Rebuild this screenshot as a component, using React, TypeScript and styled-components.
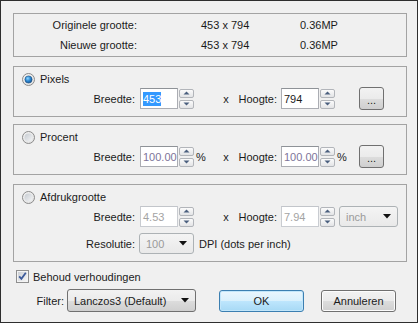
import React from "react";
import styled, { createGlobalStyle } from "styled-components";

const GlobalStyle = createGlobalStyle`
  html, body {
    margin: 0;
    padding: 0;
    background: #f0f0f0;
  }
  body {
    font-family: "Liberation Sans", Arial, sans-serif;
    font-size: 11px;
    color: #1b1b1b;
  }
`;

const Dialog = styled.div`
  width: 418px;
  height: 323px;
  box-sizing: border-box;
  border: 1px solid #2e2e2e;
  background: #f0f0f0;
  padding: 12px 11px 0 12px;
  display: flex;
  flex-direction: column;
`;

const InfoBox = styled.div`
  width: 394px;
  height: 44px;
  box-sizing: border-box;
  border: 1px solid #a3a3a3;
  padding-top: 1px;
`;

const InfoRow = styled.div`
  display: flex;
  height: 20px;
  align-items: center;
`;

const InfoLabel = styled.div`
  width: 123px;
  text-align: right;
  margin-right: 64px;
`;

const InfoValue = styled.div`
  width: 99px;
`;

const Group = styled.div<{ $top: number }>`
  width: 394px;
  box-sizing: border-box;
  margin-top: ${(p) => p.$top}px;
  border: 1px solid #a3a3a3;
  padding: 6px 0 7px 0;
  display: flex;
  flex-direction: column;
`;

const GroupHeader = styled.label`
  display: flex;
  align-items: center;
  height: 12px;
  padding-left: 8px;
  gap: 5px;
  margin-bottom: 3px;
`;

const FormRow = styled.div<{ $gap?: number }>`
  display: flex;
  align-items: center;
  height: 21px;
  margin-top: ${(p) => p.$gap ?? 0}px;
`;

const FieldLabel = styled.div<{ $w: number; $mr: number }>`
  width: ${(p) => p.$w}px;
  margin-right: ${(p) => p.$mr}px;
  text-align: right;
  flex: none;
`;

const TextBox = styled.div<{ $tone: "normal" | "muted" | "disabled" }>`
  width: 38px;
  height: 21px;
  box-sizing: border-box;
  border: 1px solid ${(p) => (p.$tone === "disabled" ? "#c9ccd1" : "#abadb3")};
  border-top-color: ${(p) => (p.$tone === "disabled" ? "#c2c5ca" : "#8e9297")};
  background: #fff;
  padding-left: 2px;
  display: flex;
  align-items: center;
  color: ${(p) =>
    p.$tone === "normal" ? "#1b1b1b" : p.$tone === "muted" ? "#7d7499" : "#a3a3a3"};
  flex: none;
`;

const Selected = styled.span`
  background: #3399ff;
  color: #fff;
  line-height: 14px;
`;

const Spin = styled.div`
  width: 15px;
  height: 20px;
  margin-left: 1px;
  display: flex;
  flex-direction: column;
  justify-content: space-between;
  flex: none;
`;

const SpinButton = styled.div`
  height: 9px;
  box-sizing: border-box;
  border: 1px solid #b2b5ba;
  border-radius: 2px;
  background: linear-gradient(#fbfbfb, #e3e4e6);
  display: flex;
  align-items: center;
  justify-content: center;
`;

const UnitCell = styled.div<{ $w: number }>`
  width: ${(p) => p.$w}px;
  padding-left: 2px;
  box-sizing: border-box;
  flex: none;
`;

const TimesCell = styled.div`
  width: 24px;
  text-align: center;
  flex: none;
`;

const SmallButton = styled.div`
  width: 25px;
  height: 23px;
  box-sizing: border-box;
  border: 1px solid #707070;
  border-radius: 3px;
  background: linear-gradient(#f2f2f2 0%, #ebebeb 50%, #dddddd 50%, #cfcfcf 100%);
  display: flex;
  align-items: center;
  justify-content: center;
  padding-top: 3px;
  flex: none;
`;

const Combo = styled.div<{ $w: number; $disabled?: boolean }>`
  width: ${(p) => p.$w}px;
  height: ${(p) => (p.$disabled ? 21 : 23)}px;
  box-sizing: border-box;
  border: 1px solid ${(p) => (p.$disabled ? "#adb2b5" : "#707070")};
  border-radius: 3px;
  background: ${(p) =>
    p.$disabled
      ? "linear-gradient(#f4f4f4, #e9e9e9)"
      : "linear-gradient(#f2f2f2 0%, #ebebeb 50%, #dddddd 50%, #cfcfcf 100%)"};
  color: ${(p) => (p.$disabled ? "#9a9a9a" : "#1b1b1b")};
  display: flex;
  align-items: center;
  justify-content: space-between;
  padding: 0 6px 0 6px;
  flex: none;
`;

const CheckRow = styled.label`
  display: flex;
  align-items: center;
  gap: 4px;
  padding-left: 3px;
  margin-top: 8px;
  height: 13px;
`;

const BottomRow = styled.div`
  display: flex;
  align-items: center;
  height: 23px;
  margin-top: 6px;
`;

const PushButton = styled.div<{ $w: number; $ml: number; $default?: boolean }>`
  width: ${(p) => p.$w}px;
  height: 22px;
  margin-left: ${(p) => p.$ml}px;
  box-sizing: border-box;
  border: 1px solid ${(p) => (p.$default ? "#3c7fb1" : "#707070")};
  border-radius: 3px;
  background: ${(p) =>
    p.$default
      ? "linear-gradient(#eaf6fd 0%, #d9f0fc 50%, #bee6fd 50%, #a7d9f5 100%)"
      : "linear-gradient(#f2f2f2 0%, #ebebeb 50%, #dddddd 50%, #cfcfcf 100%)"};
  box-shadow: ${(p) => (p.$default ? "inset 0 0 0 1px #c2e6fa" : "inset 0 0 0 1px #fcfcfc")};
  display: flex;
  align-items: center;
  justify-content: center;
  flex: none;
`;

const Radio = ({ checked }: { checked?: boolean }) => (
  <svg width="13" height="13" viewBox="0 0 13 13">
    <defs>
      <linearGradient id={checked ? "rbo1" : "rbo0"} x1="0" y1="0" x2="1" y2="1">
        <stop offset="0" stopColor="#f4f4f4" />
        <stop offset="1" stopColor="#e0e0e0" />
      </linearGradient>
      <radialGradient id="rbon" cx="0.4" cy="0.35" r="0.7">
        <stop offset="0" stopColor="#8fd6ff" />
        <stop offset="0.5" stopColor="#2e8ad4" />
        <stop offset="1" stopColor="#124f8e" />
      </radialGradient>
      <linearGradient id="rboff" x1="0" y1="0" x2="1" y2="1">
        <stop offset="0" stopColor="#c6cbd1" />
        <stop offset="1" stopColor="#f4f5f6" />
      </linearGradient>
    </defs>
    <circle cx="6.5" cy="6.5" r="6" fill={`url(#${checked ? "rbo1" : "rbo0"})`} stroke="#8b8b8b" />
    {checked ? (
      <circle cx="6.5" cy="6.5" r="3.6" fill="url(#rbon)" stroke="#1d4f80" strokeWidth="0.6" />
    ) : (
      <circle cx="6.5" cy="6.5" r="4" fill="url(#rboff)" />
    )}
  </svg>
);

const CheckBox = () => (
  <svg width="13" height="13" viewBox="0 0 13 13">
    <defs>
      <linearGradient id="cbg" x1="0" y1="0" x2="1" y2="1">
        <stop offset="0" stopColor="#cbcfd5" />
        <stop offset="1" stopColor="#f6f6f6" />
      </linearGradient>
    </defs>
    <rect x="0.5" y="0.5" width="12" height="12" fill="#f4f4f4" stroke="#8f8f8f" />
    <rect x="2" y="2" width="9" height="9" fill="url(#cbg)" />
    <path d="M3.2 6.3 L5.4 8.8 L9.8 2.8" fill="none" stroke="#3c5a9a" strokeWidth="1.8" />
  </svg>
);

const SpinArrow = ({ up }: { up?: boolean }) => (
  <svg width="7" height="4" viewBox="0 0 7 4">
    <polygon points={up ? "0.5,3.5 3.5,0.5 6.5,3.5" : "0.5,0.5 3.5,3.5 6.5,0.5"} fill="#4a5f7e" />
  </svg>
);

const DropArrow = () => (
  <svg width="8" height="5" viewBox="0 0 8 5">
    <polygon points="0,0 8,0 4,4.5" fill="#111" />
  </svg>
);

const Spinner = () => (
  <Spin>
    <SpinButton>
      <SpinArrow up />
    </SpinButton>
    <SpinButton>
      <SpinArrow />
    </SpinButton>
  </Spin>
);

export default function App() {
  return (
    <>
      <GlobalStyle />
      <Dialog>
        <InfoBox>
          <InfoRow>
            <InfoLabel>Originele grootte:</InfoLabel>
            <InfoValue>453 x 794</InfoValue>
            <div>0.36MP</div>
          </InfoRow>
          <InfoRow>
            <InfoLabel>Nieuwe grootte:</InfoLabel>
            <InfoValue>453 x 794</InfoValue>
            <div>0.36MP</div>
          </InfoRow>
        </InfoBox>

        <Group $top={9}>
          <GroupHeader>
            <Radio checked />
            Pixels
          </GroupHeader>
          <FormRow>
            <FieldLabel $w={121} $mr={5}>Breedte:</FieldLabel>
            <TextBox $tone="normal">
              <Selected>453</Selected>
            </TextBox>
            <Spinner />
            <UnitCell $w={20} />
            <TimesCell>x</TimesCell>
            <FieldLabel $w={39} $mr={4}>Hoogte:</FieldLabel>
            <TextBox $tone="normal">794</TextBox>
            <Spinner />
            <UnitCell $w={24} />
            <SmallButton>...</SmallButton>
          </FormRow>
        </Group>

        <Group $top={7}>
          <GroupHeader>
            <Radio />
            Procent
          </GroupHeader>
          <FormRow>
            <FieldLabel $w={121} $mr={5}>Breedte:</FieldLabel>
            <TextBox $tone="muted">100.00</TextBox>
            <Spinner />
            <UnitCell $w={20}>%</UnitCell>
            <TimesCell>x</TimesCell>
            <FieldLabel $w={39} $mr={4}>Hoogte:</FieldLabel>
            <TextBox $tone="muted">100.00</TextBox>
            <Spinner />
            <UnitCell $w={24}>%</UnitCell>
            <SmallButton>...</SmallButton>
          </FormRow>
        </Group>

        <Group $top={9}>
          <GroupHeader>
            <Radio />
            Afdrukgrootte
          </GroupHeader>
          <FormRow>
            <FieldLabel $w={121} $mr={5}>Breedte:</FieldLabel>
            <TextBox $tone="disabled">4.53</TextBox>
            <Spinner />
            <UnitCell $w={20} />
            <TimesCell>x</TimesCell>
            <FieldLabel $w={39} $mr={4}>Hoogte:</FieldLabel>
            <TextBox $tone="disabled">7.94</TextBox>
            <Spinner />
            <UnitCell $w={4} />
            <Combo $w={59} $disabled>
              <span>inch</span>
              <DropArrow />
            </Combo>
          </FormRow>
          <FormRow $gap={6}>
            <FieldLabel $w={121} $mr={4}>Resolutie:</FieldLabel>
            <Combo $w={55} $disabled>
              <span>100</span>
              <DropArrow />
            </Combo>
            <UnitCell $w={5} />
            <span>DPI (dots per inch)</span>
          </FormRow>
        </Group>

        <CheckRow>
          <CheckBox />
          Behoud verhoudingen
        </CheckRow>

        <BottomRow>
          <FieldLabel $w={51} $mr={3}>Filter:</FieldLabel>
          <Combo $w={129}>
            <span>Lanczos3 (Default)</span>
            <DropArrow />
          </Combo>
          <PushButton $w={85} $ml={23} $default>
            OK
          </PushButton>
          <PushButton $w={75} $ml={17}>
            Annuleren
          </PushButton>
        </BottomRow>
      </Dialog>
    </>
  );
}
